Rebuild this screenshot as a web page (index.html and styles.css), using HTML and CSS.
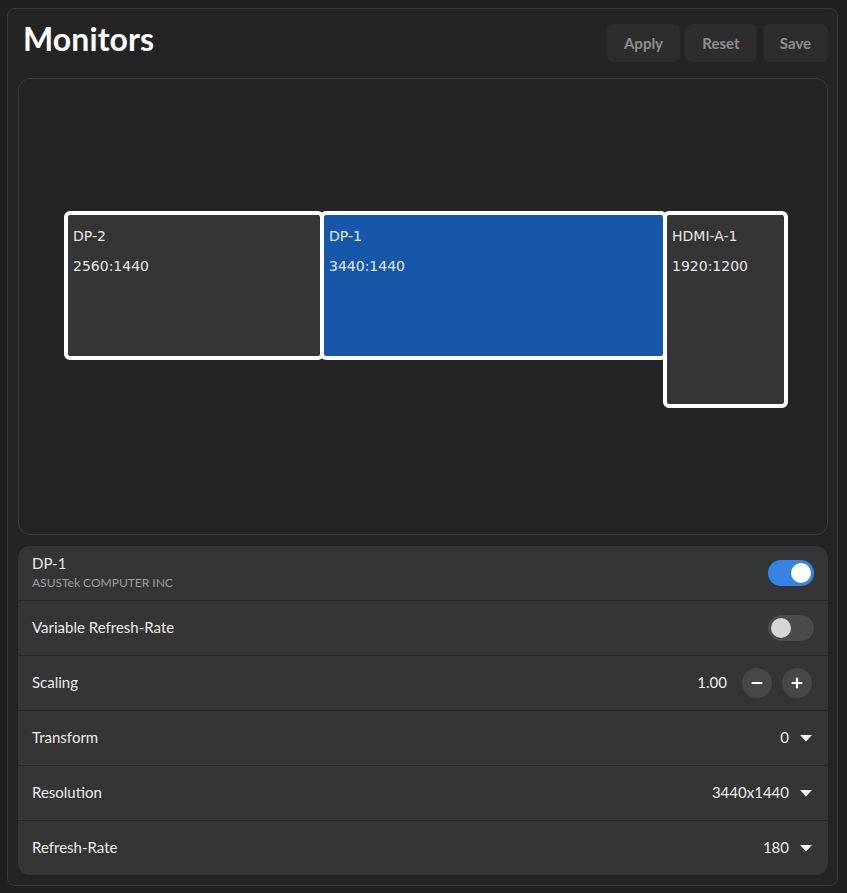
FILE: index.html
```html
<!DOCTYPE html>
<html>
<head>
<meta charset="utf-8">
<link rel="stylesheet" href="styles.css">
</head>
<body>
<div class="window">
  <header class="header">
    <h1 class="title">Monitors</h1>
    <div class="actions">
      <button class="btn btn-apply">Apply</button>
      <button class="btn btn-reset">Reset</button>
      <button class="btn btn-save">Save</button>
    </div>
  </header>
  <div class="canvas">
    <div class="monitor mon-dp2"><div>DP-2</div><div>2560:1440</div></div>
    <div class="monitor mon-dp1 active"><div>DP-1</div><div>3440:1440</div></div>
    <div class="monitor mon-hdmi"><div>HDMI-A-1</div><div>1920:1200</div></div>
  </div>
  <div class="list">
    <div class="row">
      <div class="label-stack">
        <div class="label">DP-1</div>
        <div class="sub">ASUSTek COMPUTER INC</div>
      </div>
      <div class="switch on"><span class="knob"></span></div>
    </div>
    <div class="row">
      <div class="label">Variable Refresh-Rate</div>
      <div class="switch off"><span class="knob"></span></div>
    </div>
    <div class="row">
      <div class="label">Scaling</div>
      <div class="scaler">
        <span class="value">1.00</span>
        <span class="round-btn">
          <svg width="12" height="12" viewBox="0 0 12 12"><path d="M1.5 6h9" stroke="#fff" stroke-width="2.2" stroke-linecap="round"/></svg>
        </span>
        <span class="round-btn">
          <svg width="12" height="12" viewBox="0 0 12 12"><path d="M1.5 6h9M6 1.5v9" stroke="#fff" stroke-width="2.2" stroke-linecap="round"/></svg>
        </span>
      </div>
    </div>
    <div class="row">
      <div class="label">Transform</div>
      <div class="dropdown"><span class="value">0</span><svg width="12" height="7" viewBox="0 0 12 7"><path d="M0 0h12L6 6.5z" fill="#f2f2f2"/></svg></div>
    </div>
    <div class="row">
      <div class="label">Resolution</div>
      <div class="dropdown"><span class="value">3440x1440</span><svg width="12" height="7" viewBox="0 0 12 7"><path d="M0 0h12L6 6.5z" fill="#f2f2f2"/></svg></div>
    </div>
    <div class="row">
      <div class="label">Refresh-Rate</div>
      <div class="dropdown"><span class="value">180</span><svg width="12" height="7" viewBox="0 0 12 7"><path d="M0 0h12L6 6.5z" fill="#f2f2f2"/></svg></div>
    </div>
  </div>
</div>
</body>
</html>
```
FILE: styles.css
```css
* { box-sizing: border-box; }
html, body { margin: 0; padding: 0; }
body {
  background: #202020;
  font-family: "Lato", "Noto Sans", sans-serif;
  color: #ececec;
  width: 847px;
  height: 893px;
  overflow: hidden;
}
.window {
  margin: 8px 9px 0 7px;
  height: 878px;
  border: 1px solid #3a3a3a;
  border-radius: 8px;
  background: #242424;
  padding: 0 9px 9px 10px;
  display: flex;
  flex-direction: column;
}
.header {
  display: flex;
  align-items: center;
  justify-content: space-between;
  padding-top: 15px;
  height: 69px;
  padding-bottom: 16px;
}
.title {
  margin: 0 0 0 6px;
  font-size: 32px;
  font-weight: 700;
  color: #ffffff;
  position: relative;
  top: -5px;
  left: -1px;
  letter-spacing: 0.1px;
}
.actions { display: flex; gap: 5px; }
.btn {
  height: 38px;
  border: none;
  border-radius: 7px;
  background: #2d2d2d;
  color: #8e8e8e;
  font-family: "Lato", "Noto Sans", sans-serif;
  font-size: 15px;
  font-weight: 700;
  padding: 0;
}
.btn-apply { width: 73px; }
.btn-reset { width: 72px; margin-left: 0; }
.btn-save { width: 65px; margin-left: 1px; }
.canvas {
  position: relative;
  height: 457px;
  border: 1px solid #3c3c3c;
  border-radius: 12px;
  background: #242424;
  margin-bottom: 11px;
}
.monitor {
  position: absolute;
  border: 4.5px solid #ffffff;
  border-radius: 6px;
  background: #353535;
  font-family: "DejaVu Sans", sans-serif;
  font-size: 14px;
  line-height: 30px;
  color: #e6e6e6;
  padding: 6px 5px;
}
.mon-dp2 { left: 45px; top: 132px; width: 260px; height: 149px; }
.mon-dp1 { left: 301px; top: 132px; width: 347px; height: 149px; background: #1757aa; }
.mon-hdmi { left: 644px; top: 132px; width: 125px; height: 197px; }
.list {
  background: #353535;
  border-radius: 12px;
  overflow: hidden;
}
.row {
  height: 55px;
  display: flex;
  align-items: center;
  justify-content: space-between;
  padding: 0 14px;
  border-top: 1px solid #272727;
}
.row:first-child { height: 54px; border-top: none; }
.label { font-size: 15px; color: #ececec; position: relative; top: -1px; }
.label-stack { display: flex; flex-direction: column; margin-top: -2px; }
.label-stack .label { line-height: 18px; top: 0; }
.sub { font-size: 12px; color: #9d9d9d; line-height: 16px; margin-top: 3px; }
.switch {
  width: 46px;
  height: 26px;
  border-radius: 13px;
  position: relative;
}
.switch.on { background: #3584e4; }
.switch.off { background: #4b4b4b; }
.knob {
  position: absolute;
  top: 3px;
  width: 20px;
  height: 20px;
  border-radius: 50%;
}
.switch.on .knob { right: 3px; background: #ffffff; }
.switch.off .knob { left: 3px; background: #d5d5d5; }
.scaler { display: flex; align-items: center; gap: 10px; margin-right: 2px; }
.scaler .value { margin-right: 5px; }
.value { font-size: 15px; color: #ececec; position: relative; top: -1px; }
.round-btn {
  width: 30px;
  height: 30px;
  border-radius: 50%;
  background: #474747;
  display: flex;
  align-items: center;
  justify-content: center;
}
.dropdown { display: flex; align-items: center; gap: 11px; margin-right: 2px; }
.dropdown svg { display: block; }
```
